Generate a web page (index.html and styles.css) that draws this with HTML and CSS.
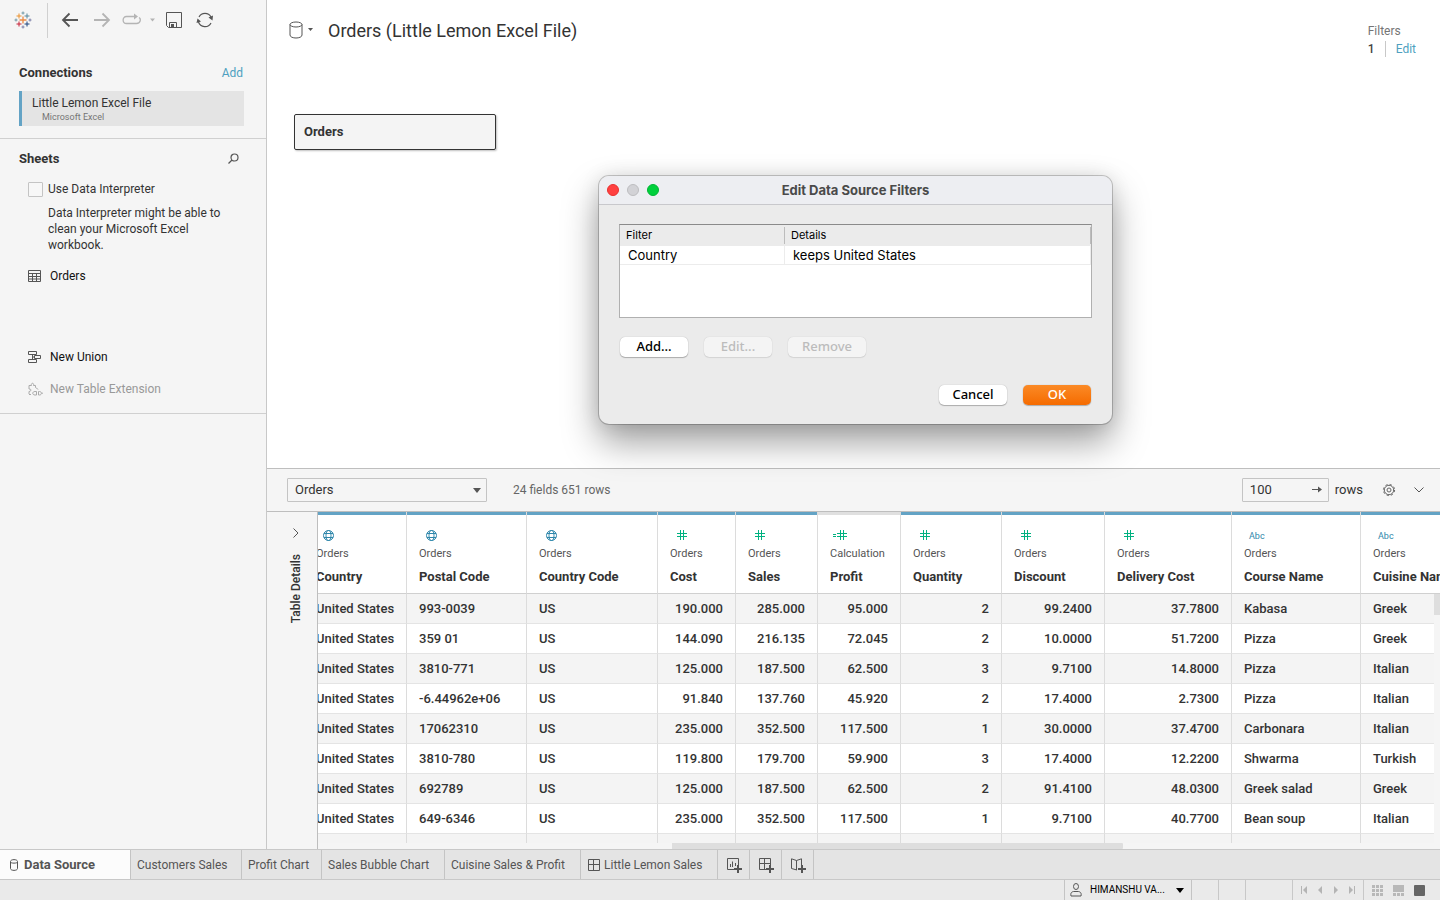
FILE: index.html
```html
<!DOCTYPE html>
<html lang="en">
<head>
<meta charset="utf-8">
<title>Orders (Little Lemon Excel File)</title>
<link rel="stylesheet" href="styles.css">
</head>
<body>
<svg class="defs" aria-hidden="true">
  <symbol id="globe" viewBox="0 0 12 12"><g fill="none" stroke="#2f87ab" stroke-width="1"><circle cx="6.500" cy="6.500" r="5"/><ellipse cx="6.500" cy="6.500" rx="2.500" ry="5"/><path d="M2 4.500H11M2 8.500H11"/></g></symbol>
  <symbol id="hash" viewBox="0 0 12 12"><path d="M4.500 1V11M7.500 1V11M1 4.500H11M1 7.500H11" stroke="#00b180" fill="none"/></symbol>
  <symbol id="calc" viewBox="0 0 16 12"><path d="M8.500 1V11M11.500 1V11M5 4.500H15M5 7.500H15M1 5.500H4M1 7.500H4" stroke="#00b180" fill="none"/></symbol>
</svg>
<div class="workspace">
  <aside class="sidebar">
    <div class="toolbar">
      <button class="tool logo" aria-label="Start page"><svg width="18" height="18" viewBox="0 0 18 18" fill="none" stroke-width="1"><path stroke="#eb8a44" stroke-width="1.300" d="M9 5.500V12.500M5.500 9H12.500"/><path stroke="#eb912c" d="M5 2.500V7.500M2.500 5H7.500"/><path stroke="#59879b" d="M13 2.500V7.500M10.500 5H15.500"/><path stroke="#c72037" d="M5 10.500V15.500M2.500 13H7.500"/><path stroke="#1f457e" d="M13 10.500V15.500M10.500 13H15.500"/><path stroke="#7199a6" d="M9 .5V3.500M7.500 2H10.500M2 7.500V10.500M.5 9H3.500"/><path stroke="#7b7fa8" d="M9 14.500V17.500M7.500 16H10.500M16 7.500V10.500M14.500 9H17.500"/></svg></button>
      <button class="tool back" aria-label="Back"><svg width="18" height="16" viewBox="0 0 18 16" fill="none" stroke="#555" stroke-width="1.800"><path d="M17 8H2M8.500 1.500L2 8L8.500 14.500"/></svg></button>
      <button class="tool forward" aria-label="Forward"><svg width="18" height="16" viewBox="0 0 18 16" fill="none" stroke="#b4b4b4" stroke-width="1.800"><path d="M1 8H16M9.500 1.500L16 8L9.500 14.500"/></svg></button>
      <button class="tool replay" aria-label="Replay"><svg width="33" height="14" viewBox="0 0 33 14" fill="none" stroke="#b4b4b4"><path d="M9 3.500H4.500C0 3.500 0 10.500 4.500 10.500H14.500C19 10.500 19 5.500 17 4.500M7 3.500H13" stroke-width="1.300"/><path d="M12 .5L16 3.500L12 6.500Z" fill="#b4b4b4" stroke="none"/><path d="M28 5.500H33L30.500 8.500Z" fill="#b4b4b4" stroke="none"/></svg></button>
      <button class="tool save" aria-label="Save"><svg width="16" height="16" viewBox="0 0 16 16" fill="none" stroke="#555"><path d="M.5 .5H15.500V15.500H2.500L.5 13.500ZM3.500 15V10.500H10.500V15"/><path d="M5 12H8V15H5Z" fill="#555" stroke="none"/></svg></button>
      <button class="tool refresh" aria-label="Refresh"><svg width="18" height="16" viewBox="0 0 18 16" fill="none" stroke="#555" stroke-width="1.200"><path d="M3 5A6.800 6.800 0 0 1 15 5M15 11A6.800 6.800 0 0 1 2.500 10"/><path d="M12.500 5.500L17 3.500L16.500 8.500ZM.5 11L1.500 6.500L5 9.500Z" fill="#555" stroke="none"/></svg></button>
    </div>
    <section class="connections">
      <div class="side-head"><h2>Connections</h2><a href="#add">Add</a></div>
      <div class="connection"><div>Little Lemon Excel File</div><small>Microsoft Excel</small></div>
    </section>
    <section class="sheets">
      <div class="side-head"><h2>Sheets</h2><button class="tool" aria-label="Search sheets"><svg width="12" height="12" viewBox="0 0 12 12" fill="none" stroke="#555" stroke-width="1.200"><circle cx="7.500" cy="4.500" r="3.500"/><path d="M5 7L1.500 10.500"/></svg></button></div>
      <div class="interpreter"><input type="checkbox" id="interp"><label for="interp">Use Data Interpreter</label></div>
      <p class="hint">Data Interpreter might be able to clean your Microsoft Excel workbook.</p>
      <div class="sheet-list">
        <button class="sheet"><svg width="15" height="14" viewBox="0 0 15 14" fill="none" stroke="#555"><path d="M.5 1.500H12.500V12.500H.5ZM.5 4.500H12.500M.5 7.500H12.500M.5 10H12.500M4.500 4V12M8.500 4V12"/></svg>Orders</button>
      </div>
      <button class="sheet"><svg width="15" height="14" viewBox="0 0 15 14" fill="none" stroke="#555"><path d="M.5 1.500H8.500V4.500H.5ZM6.500 5.500H12.500V8.500H6.500ZM.5 9.500H8.500V12.500H.5ZM4.500 4.500V9.500M4.500 7H6.500"/></svg>New Union</button>
      <button class="sheet muted" disabled><svg width="15" height="14" viewBox="0 0 15 14" fill="none" stroke="#aaa"><path d="M1 12V9.500C3.500 9.500 3.500 6.500 1 7V3.500H3.500C2.500 .5 6.500 .5 5.500 3.500H7.500V5.500C8 6.500 9.500 6 10 7.500M1 12.500H3M8.500 9.500V13H7C4 13 4 9.500 7 9.500ZM10.500 9.500H11.500C14 9.500 14 13 11.500 13H10.500ZM13.500 11.200H15"/></svg>New Table Extension</button>
    </section>
  </aside>

  <main class="main">
    <section class="canvas">
      <header class="source">
        <button class="tool source-menu" aria-label="Data source menu"><svg width="24" height="18" viewBox="0 0 24 18" fill="none" stroke="#555"><ellipse cx="7" cy="3.500" rx="6" ry="2.500"/><path d="M1 3.500V14C1 18 13 18 13 14V3.500"/><path d="M19 7H24L21.500 10Z" fill="#555" stroke="none"/></svg></button>
        <h1>Orders (Little Lemon Excel File)</h1>
        <div class="filters"><span>Filters</span><div class="filter-line"><b>1</b><a href="#edit">Edit</a></div></div>
      </header>
      <div class="node">Orders</div>
    </section>

    <section class="preview">
      <div class="preview-bar">
        <div class="picker"><select aria-label="Table"><option>Orders</option></select><svg width="8" height="5" viewBox="0 0 8 5"><path d="M0 0H8L4 5Z" fill="#555"/></svg></div>
        <span class="count">24 fields 651 rows</span>
        <div class="rows-box"><input type="text" id="rows" value="100"><button class="tool" aria-label="Apply"><svg width="12" height="8" viewBox="0 0 12 8"><path d="M1 3.500H8" stroke="#555"/><path d="M7 .5L11 3.500L7 6.500Z" fill="#555"/></svg></button></div>
        <label for="rows">rows</label>
        <button class="tool gear" aria-label="Settings"><svg width="14" height="14" viewBox="0 0 14 14" fill="none" stroke="#666"><circle cx="7" cy="7" r="4.700"/><circle cx="7" cy="7" r="5.600" stroke-dasharray="2.200 2.200"/><circle cx="7" cy="7" r="2"/></svg></button>
        <button class="tool" aria-label="Collapse"><svg width="10" height="6" viewBox="0 0 10 6" fill="none" stroke="#555"><path d="M.5 .5L5 5L9.500 .5"/></svg></button>
      </div>
      <div class="preview-body">
        <div class="details-rail">
          <button class="tool" aria-label="Expand table details"><svg width="6" height="10" viewBox="0 0 6 10" fill="none" stroke="#555"><path d="M.5 .5L5 5L.5 9.500"/></svg></button>
          <span>Table Details</span>
        </div>
        <div class="grid">
          <div class="grid-clip">
          <table>
            <colgroup><col class="c1"><col class="c2"><col class="c3"><col class="c4"><col class="c5"><col class="c6"><col class="c7"><col class="c8"><col class="c9"><col class="c10"><col></colgroup>
            <thead><tr>
              <th><svg class="type"><use href="#globe"/></svg><small>Orders</small>Country</th>
              <th><svg class="type"><use href="#globe"/></svg><small>Orders</small>Postal Code</th>
              <th><svg class="type"><use href="#globe"/></svg><small>Orders</small>Country Code</th>
              <th><svg class="type"><use href="#hash"/></svg><small>Orders</small>Cost</th>
              <th><svg class="type"><use href="#hash"/></svg><small>Orders</small>Sales</th>
              <th class="calculated"><svg class="type wide"><use href="#calc"/></svg><small>Calculation</small>Profit</th>
              <th><svg class="type"><use href="#hash"/></svg><small>Orders</small>Quantity</th>
              <th><svg class="type"><use href="#hash"/></svg><small>Orders</small>Discount</th>
              <th><svg class="type"><use href="#hash"/></svg><small>Orders</small>Delivery Cost</th>
              <th><span class="abc">Abc</span><small>Orders</small>Course Name</th>
              <th><span class="abc">Abc</span><small>Orders</small>Cuisine Name</th>
            </tr></thead>
            <tbody>
              <tr><td>United States</td><td>993-0039</td><td>US</td><td class="n">190.000</td><td class="n">285.000</td><td class="n">95.000</td><td class="n">2</td><td class="n">99.2400</td><td class="n">37.7800</td><td>Kabasa</td><td>Greek</td></tr>
              <tr><td>United States</td><td>359 01</td><td>US</td><td class="n">144.090</td><td class="n">216.135</td><td class="n">72.045</td><td class="n">2</td><td class="n">10.0000</td><td class="n">51.7200</td><td>Pizza</td><td>Greek</td></tr>
              <tr><td>United States</td><td>3810-771</td><td>US</td><td class="n">125.000</td><td class="n">187.500</td><td class="n">62.500</td><td class="n">3</td><td class="n">9.7100</td><td class="n">14.8000</td><td>Pizza</td><td>Italian</td></tr>
              <tr><td>United States</td><td>-6.44962e+06</td><td>US</td><td class="n">91.840</td><td class="n">137.760</td><td class="n">45.920</td><td class="n">2</td><td class="n">17.4000</td><td class="n">2.7300</td><td>Pizza</td><td>Italian</td></tr>
              <tr><td>United States</td><td>17062310</td><td>US</td><td class="n">235.000</td><td class="n">352.500</td><td class="n">117.500</td><td class="n">1</td><td class="n">30.0000</td><td class="n">37.4700</td><td>Carbonara</td><td>Italian</td></tr>
              <tr><td>United States</td><td>3810-780</td><td>US</td><td class="n">119.800</td><td class="n">179.700</td><td class="n">59.900</td><td class="n">3</td><td class="n">17.4000</td><td class="n">12.2200</td><td>Shwarma</td><td>Turkish</td></tr>
              <tr><td>United States</td><td>692789</td><td>US</td><td class="n">125.000</td><td class="n">187.500</td><td class="n">62.500</td><td class="n">2</td><td class="n">91.4100</td><td class="n">48.0300</td><td>Greek salad</td><td>Greek</td></tr>
              <tr><td>United States</td><td>649-6346</td><td>US</td><td class="n">235.000</td><td class="n">352.500</td><td class="n">117.500</td><td class="n">1</td><td class="n">9.7100</td><td class="n">40.7700</td><td>Bean soup</td><td>Italian</td></tr>
              <tr><td></td><td></td><td></td><td></td><td></td><td></td><td></td><td></td><td></td><td></td><td></td></tr>
            </tbody>
          </table>
          <div class="vscroll"><div class="vthumb"></div></div>
          </div>
          <div class="hscroll"><div class="hthumb"></div></div>
        </div>
      </div>
    </section>
  </main>
</div>

<nav class="tabs">
  <button class="tab t-source"><svg width="10" height="12" viewBox="0 0 10 12" fill="none" stroke="#555"><path d="M1.500 2.500C1.500 0 8.500 0 8.500 2.500V9.500C8.500 12 1.500 12 1.500 9.500ZM1.500 3C1.500 4.500 8.500 4.500 8.500 3"/></svg>Data Source</button>
  <button class="tab t-customers">Customers Sales</button>
  <button class="tab t-profit">Profit Chart</button>
  <button class="tab t-bubble">Sales Bubble Chart</button>
  <button class="tab t-cuisine">Cuisine Sales &amp; Profit</button>
  <button class="tab t-lemon"><svg width="12" height="12" viewBox="0 0 12 12" fill="none" stroke="#555"><path d="M.5 .5H11.500V11.500H.5ZM.5 5.500H11.500M5.500 .5V11.500"/></svg>Little Lemon Sales</button>
  <button class="tab add" aria-label="New worksheet"><svg width="16" height="16" viewBox="0 0 16 16" fill="none" stroke="#555"><path d="M7 11.500H.5V.5H11.500V7M3.500 9V6M5.500 9V3.500M8.500 8V5"/><path d="M11 7V15M7 11H15" stroke-width="2"/></svg></button>
  <button class="tab add" aria-label="New dashboard"><svg width="16" height="16" viewBox="0 0 16 16" fill="none" stroke="#555"><path d="M7 11.500H.5V.5H11.500V7M.5 5.500H11.500M5.500 .5V11.500"/><path d="M11 7V15M7 11H15" stroke-width="2"/></svg></button>
  <button class="tab add" aria-label="New story"><svg width="16" height="16" viewBox="0 0 16 16" fill="none" stroke="#555"><path d="M6 12L.5 10.500V.8L5.500 2.500L10.500 .8V7M5.500 2.500V12"/><path d="M11 7V15M7 11H15" stroke-width="2"/></svg></button>
</nav>

<footer class="status">
  <button class="user"><svg width="12" height="14" viewBox="0 0 12 14" fill="none" stroke="#555"><ellipse cx="6" cy="3.500" rx="2.500" ry="3"/><path d="M1 13C0 9 3 8.500 4 8.500H8C9 8.500 12 9 11 13Z"/></svg><span>HIMANSHU VA...</span><svg width="8" height="5" viewBox="0 0 8 5"><path d="M0 0H8L4 5Z"/></svg></button>
  <div class="cell s27"></div><div class="cell s27"></div><div class="cell s47"></div>
  <div class="cell pager">
    <button class="tool" aria-label="First"><svg width="8" height="8" viewBox="0 0 8 8" fill="#b4b4b4"><path d="M1 0H2V8H1ZM7 0V8L3 4Z"/></svg></button>
    <button class="tool" aria-label="Previous"><svg width="8" height="8" viewBox="0 0 8 8" fill="#b4b4b4"><path d="M6 0V8L2 4Z"/></svg></button>
    <button class="tool" aria-label="Next"><svg width="8" height="8" viewBox="0 0 8 8" fill="#b4b4b4"><path d="M2 0V8L6 4Z"/></svg></button>
    <button class="tool" aria-label="Last"><svg width="8" height="8" viewBox="0 0 8 8" fill="#b4b4b4"><path d="M6 0H7V8H6ZM1 0V8L5 4Z"/></svg></button>
  </div>
  <div class="views">
    <button class="tool" aria-label="Grid view"><svg width="11" height="11" viewBox="0 0 11 11" fill="#b8b8b8"><path d="M0 0H3V3H0ZM4 0H7V3H4ZM8 0H11V3H8ZM0 4H3V7H0ZM4 4H7V7H4ZM8 4H11V7H8ZM0 8H3V11H0ZM4 8H7V11H4ZM8 8H11V11H8Z"/></svg></button>
    <button class="tool" aria-label="Filmstrip view"><svg width="11" height="11" viewBox="0 0 11 11" fill="#b8b8b8"><path d="M0 0H11V7H0ZM0 8H3V11H0ZM4 8H7V11H4ZM8 8H11V11H8Z"/></svg></button>
    <button class="tool" aria-label="Single view"><svg width="11" height="11" viewBox="0 0 11 11"><rect width="11" height="11" rx="1" fill="#666"/></svg></button>
  </div>
</footer>

<div class="dialog" role="dialog" aria-labelledby="dialog-title">
  <header class="titlebar"><button class="light red" aria-label="Close"></button><button class="light gray" aria-label="Minimize"></button><button class="light green" aria-label="Zoom"></button><h2 id="dialog-title">Edit Data Source Filters</h2></header>
  <div class="dialog-body">
    <div class="filter-box">
      <table class="filter-table">
        <thead><tr><th><span>Filter</span></th><th><span>Details</span></th></tr></thead>
        <tbody><tr><td>Country</td><td>keeps United States</td></tr></tbody>
      </table>
    </div>
    <div class="actions"><button class="btn">Add...</button><button class="btn" disabled>Edit...</button><button class="btn wide-btn" disabled>Remove</button></div>
    <div class="actions end"><button class="btn">Cancel</button><button class="btn primary">OK</button></div>
  </div>
</div>
</body>
</html>
```

FILE: styles.css
```css
* { box-sizing: border-box; }

body {
  margin: 0;
  height: 100vh;
  display: flex;
  flex-direction: column;
  overflow: hidden;
  position: relative;
  font: 12px/16px Roboto, "Liberation Sans", sans-serif;
  color: #333;
  background: #f5f5f5;
}

h1, h2, p { margin: 0; }
h2 { font-size: 13px; font-weight: 700; }
a { color: #4e9fc0; text-decoration: none; }
button, input, select { font: inherit; color: inherit; }
svg { display: block; flex: none; }
.defs { position: absolute; width: 0; height: 0; }

.tool {
  display: flex;
  align-items: center;
  padding: 0;
  border: 0;
  background: none;
}

.workspace { flex: 1; display: flex; min-height: 0; }

/* Sidebar */
.sidebar {
  flex: 0 0 267px;
  border-right: 1px solid #c8c8c8;
  background: #f5f5f5;
}
.toolbar { display: flex; align-items: center; height: 40px; padding-left: 14px; }
.logo { height: 35px; width: 34px; border-right: 1px solid #d0d0d0; margin-right: 13px; }
.back { margin-right: 14px; }
.forward { margin-right: 11px; }
.replay { margin-right: 11px; }
.save { margin-right: 14px; }
.connections { padding: 25px 22px 12px 19px; border-bottom: 1px solid #d0d0d0; }
.side-head { display: flex; justify-content: space-between; align-items: center; }
.side-head a { margin-right: 1px; }
.connection {
  margin-top: 10px;
  height: 35px;
  padding: 4px 10px;
  border-left: 3px solid #63a3c5;
  background: #e4e4e4;
}
.connection small { display: block; padding-left: 10px; font-size: 9px; line-height: 12px; color: #757575; }
.sheets { padding: 12px 27px 8px 19px; border-bottom: 1px solid #d0d0d0; }
.interpreter { display: flex; align-items: center; gap: 5px; margin: 14px 0 0 9px; }
.interpreter input {
  appearance: none;
  width: 15px;
  height: 15px;
  margin: 0;
  border: 1px solid #c4c4c4;
  border-radius: 1px;
  background: #f7f7f7;
}
.hint { margin: 8px 0 0 29px; }
.sheet-list { height: 81px; margin-top: 7px; }
.sheet {
  display: flex;
  align-items: center;
  gap: 7px;
  height: 32px;
  width: 100%;
  padding: 0 0 0 9px;
  border: 0;
  background: none;
  color: #111;
}
.sheet.muted { color: #999; }

/* Data source canvas */
.main { flex: 1; min-width: 0; display: flex; flex-direction: column; }
.canvas { flex: 1; min-height: 0; background: #fff; }
.source { display: flex; align-items: center; padding: 18px 24px 0 22px; }
.source h1 { margin-left: 15px; font-size: 18px; line-height: 26px; font-weight: 400; }
.filters { margin: 4px 0 0 auto; line-height: 18px; color: #757575; height: 36px; }
.source-menu, .source h1 { align-self: flex-start; height: 24px; }
.filter-line { display: flex; align-items: center; }
.filter-line b { font-weight: 500; color: #444; width: 18px; height: 16px; line-height: 16px; border-right: 1px solid #c8c8c8; margin-right: 10px; }
.node {
  width: 202px;
  height: 36px;
  margin: 56px 0 0 27px;
  padding: 9px;
  border: 1px solid #333;
  border-radius: 2px;
  background: #f4f4f4;
  box-shadow: 1px 1px 2px rgba(0, 0, 0, 0.25);
  font-size: 13px;
  font-weight: 700;
}

/* Preview pane */
.preview { flex: 0 0 381px; min-height: 0; max-height: 381px; display: flex; flex-direction: column; border-top: 1px solid #bebebe; }
.preview-bar { flex: 0 0 43px; display: flex; align-items: center; padding: 0 16px 0 20px; border-bottom: 1px solid #bebebe; font-size: 13px; }
.picker { position: relative; width: 200px; }
.picker select {
  appearance: none;
  display: block;
  width: 100%;
  height: 24px;
  padding: 0 7px;
  border: 1px solid #c4c4c4;
  border-radius: 1px;
  background: #f5f5f5;
}
.picker svg { position: absolute; right: 6px; top: 10px; pointer-events: none; }
.count { margin: 0 auto 0 26px; font-size: 12px; color: #666; }
.rows-box { display: flex; align-items: center; width: 87px; height: 24px; padding: 0 5px 0 7px; margin-right: 6px; border: 1px solid #c4c4c4; border-radius: 1px; }
.rows-box input { flex: 1; min-width: 0; padding: 0; border: 0; background: none; outline: 0; }
.gear { margin: 0 18px 0 19px; }

.preview-body { flex: 1; min-height: 0; display: flex; }
.details-rail { flex: 0 0 51px; display: flex; flex-direction: column; align-items: center; gap: 16px; padding: 16px 0 0 8px; border-right: 1px solid #bebebe; }
.details-rail span { writing-mode: vertical-rl; transform: rotate(180deg); font-weight: 500; }
.grid { flex: 1; min-width: 0; display: flex; flex-direction: column; }
.grid-clip { flex: 1; min-height: 0; overflow: hidden; position: relative; }
.grid table { width: calc(100% + 45px); margin-left: -14px; table-layout: fixed; border-collapse: separate; border-spacing: 0; font-size: 13px; }
.c1 { width: 103px; }
.c2 { width: 120px; }
.c3 { width: 131px; }
.c4 { width: 78px; }
.c5 { width: 82px; }
.c6 { width: 83px; }
.c7 { width: 101px; }
.c8 { width: 103px; }
.c9 { width: 127px; }
.c10 { width: 129px; }
.grid th {
  height: 82px;
  padding: 17px 0 8px 12px;
  text-align: left;
  vertical-align: top;
  white-space: nowrap;
  font-weight: 700;
  background: #fff;
  border-right: 1px solid #dcdcdc;
  border-bottom: 1px solid #d0d0d0;
  box-shadow: inset 0 3px #63a3c5;
}
.grid th.calculated { box-shadow: inset 0 3px #e0e0e0; }
.grid th small { display: block; margin: 5px 0 7px; font-size: 11px; line-height: 16px; font-weight: 400; color: #555; }
.type { width: 12px; height: 12px; margin-left: 6px; }
.type.wide { width: 16px; margin-left: 2px; }
.abc { display: block; height: 12px; margin-left: 5px; font-size: 9px; line-height: 14px; font-weight: 400; color: #2f87ab; }
.grid td { height: 30px; padding: 0 12px; white-space: nowrap; font-weight: 500; background: #fff; border-right: 1px solid #dcdcdc; border-bottom: 1px solid #e4e4e4; }
.grid tbody tr:nth-child(odd) td { background: #f4f4f4; }
.grid td.n { text-align: right; }
.vscroll { position: absolute; top: 82px; right: 0; bottom: 0; width: 6px; background: #f5f5f5; }
.vthumb { height: 21px; background: #dedede; }
.hscroll { flex: 0 0 6px; padding-left: 354px; }
.hthumb { width: 451px; height: 6px; background: #dedede; border-radius: 0 1px 1px 0; }

/* Sheet tabs */
.tabs { flex: 0 0 31px; display: flex; border-top: 1px solid #c8c8c8; border-bottom: 1px solid #c8c8c8; background: #e4e4e4; }
.tab {
  display: flex;
  align-items: center;
  gap: 4px;
  padding: 0 6px;
  border: 0;
  border-right: 1px solid #c4c4c4;
  background: none;
  color: #555;
  white-space: nowrap;
}
.t-source { width: 131px; padding-left: 9px; gap: 5px; background: #fcfcfc; font-size: 13px; font-weight: 700; }
.t-customers { width: 111px; }
.t-profit { width: 80px; }
.t-bubble { width: 123px; }
.t-cuisine { width: 136px; }
.t-lemon { width: 137px; padding-left: 7px; }
.tab.add { width: 32px; padding: 3px 0 0 9px; }

/* Status bar */
.status { flex: 0 0 20px; display: flex; justify-content: flex-end; background: #eaeaea; }
.user { display: flex; align-items: center; width: 128px; padding: 0 7px 0 5px; gap: 8px; border: 0; border-left: 1px solid #c4c4c4; border-right: 1px solid #c4c4c4; background: none; color: #000; font-size: 10px; white-space: nowrap; }
.user span { margin-right: auto; }
.cell { border-right: 1px solid #c8c8c8; }
.s27 { width: 27px; }
.s47 { width: 47px; }
.pager { display: flex; gap: 8px; width: 71px; padding-left: 7px; }
.views { display: flex; gap: 10px; width: 76px; padding-left: 8px; }

/* Filter dialog window */
.dialog {
  position: absolute;
  left: 599px;
  top: 176px;
  width: 513px;
  border-radius: 10px;
  background: #ebebeb;
  box-shadow: 0 0 0 1px rgba(0, 0, 0, 0.2), 0 18px 36px rgba(0, 0, 0, 0.38), 0 0 20px rgba(0, 0, 0, 0.1);
  font-family: Inter, sans-serif;
  color: #000;
}
.titlebar { display: flex; align-items: center; gap: 8px; height: 29px; padding: 0 8px 1px; border-bottom: 1px solid #c8c8cc; border-radius: 10px 10px 0 0; background: #edeef2; }
.titlebar h2 { flex: 1; padding-right: 60px; text-align: center; font-weight: 700; color: #4a4a4a; }
.light { width: 12px; height: 12px; padding: 0; border: 1px solid; border-radius: 50%; }
.red { background: #ff4040; border-color: #e8302f; }
.gray { background: #d2d2d6; border-color: #bdbdc0; }
.green { background: #00d03c; border-color: #00b534; }
.dialog-body { padding: 19px 20px; }
.filter-box { height: 94px; border: 1px solid #b0b0b0; border-top-color: #8a8a8a; background: #fff; }
.filter-table { width: 100%; table-layout: fixed; border-collapse: separate; border-spacing: 0; }
.filter-table th { height: 21px; padding: 2px 0; background: #ebebeb; font-size: 11px; font-weight: 400; text-align: left; }
.filter-table th:first-child { width: 165px; }
.filter-table th span { display: block; height: 17px; line-height: 16px; padding-left: 6px; border-right: 1px solid #bcbcbc; }
.filter-table td { height: 19px; padding: 0 8px; font-size: 13px; line-height: 18px; border-right: 1px solid #ececec; border-bottom: 1px solid #ececec; }
.actions { display: flex; gap: 16px; margin: 19px 0 0 1px; }
.actions.end { justify-content: flex-end; margin: 28px 1px 0 0; }
.btn {
  width: 68px;
  height: 20px;
  padding: 0 0 2px;
  border: 0;
  border-radius: 5px;
  background: #fff;
  box-shadow: 0 0 1px rgba(0, 0, 0, 0.3), 0 1px 1px rgba(0, 0, 0, 0.25);
  font-family: "Noto Sans", sans-serif;
  font-size: 13px;
  font-weight: 500;
  line-height: 16px;
  color: #000;
}
.btn:disabled { background: #f4f4f4; color: #bcbcbc; box-shadow: 0 0 1px rgba(0, 0, 0, 0.2), 0 1px 1px rgba(0, 0, 0, 0.08); }
.wide-btn { width: 78px; }
.primary { background: linear-gradient(#fb8a26, #f56b00); color: #fff; }
```
